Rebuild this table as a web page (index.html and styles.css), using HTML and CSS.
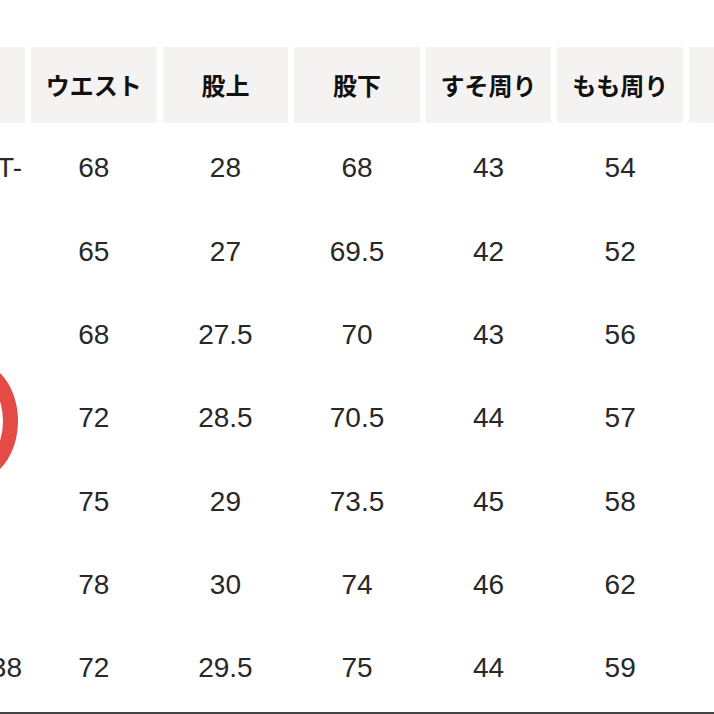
FILE: index.html
```html
<!DOCTYPE html>
<html lang="ja">
<head>
<meta charset="utf-8">
<link rel="stylesheet" href="styles.css">
</head>
<body>
<div class="page">
  <div class="table">
    <div class="cell head"></div>
    <div class="cell head">ウエスト</div>
    <div class="cell head">股上</div>
    <div class="cell head">股下</div>
    <div class="cell head">すそ周り</div>
    <div class="cell head">もも周り</div>
    <div class="cell head"></div>

    <div class="cell first">SHORT-</div>
    <div class="cell">68</div><div class="cell">28</div><div class="cell">68</div><div class="cell">43</div><div class="cell">54</div><div class="cell"></div>

    <div class="cell first"></div>
    <div class="cell">65</div><div class="cell">27</div><div class="cell">69.5</div><div class="cell">42</div><div class="cell">52</div><div class="cell"></div>

    <div class="cell first"></div>
    <div class="cell">68</div><div class="cell">27.5</div><div class="cell">70</div><div class="cell">43</div><div class="cell">56</div><div class="cell"></div>

    <div class="cell first"></div>
    <div class="cell">72</div><div class="cell">28.5</div><div class="cell">70.5</div><div class="cell">44</div><div class="cell">57</div><div class="cell"></div>

    <div class="cell first"></div>
    <div class="cell">75</div><div class="cell">29</div><div class="cell">73.5</div><div class="cell">45</div><div class="cell">58</div><div class="cell"></div>

    <div class="cell first"></div>
    <div class="cell">78</div><div class="cell">30</div><div class="cell">74</div><div class="cell">46</div><div class="cell">62</div><div class="cell"></div>

    <div class="cell first">W38</div>
    <div class="cell">72</div><div class="cell">29.5</div><div class="cell">75</div><div class="cell">44</div><div class="cell">59</div><div class="cell"></div>
  </div>
  <div class="rule"></div>
  <div class="mark"></div>
</div>
</body>
</html>
```

FILE: styles.css
```css
html, body {
  margin: 0;
  padding: 0;
  background: #ffffff;
}
body {
  width: 714px;
  height: 714px;
  overflow: hidden;
}
.page {
  position: relative;
  width: 714px;
  height: 714px;
  overflow: hidden;
  padding-top: 43.33px;
  box-sizing: border-box;
}
.table {
  display: grid;
  grid-template-columns: repeat(7, 125.6px);
  grid-auto-rows: 83.33px;
  column-gap: 6px;
  margin-left: -100.6px;
  width: max-content;
}
.cell {
  display: flex;
  align-items: center;
  justify-content: center;
  font-family: "Liberation Sans", Arial, sans-serif;
  font-size: 28px;
  color: #282828;
  white-space: nowrap;
}
.cell.head {
  margin: 3.3px 0;
  background: #f4f3f2;
  font-family: "Noto Sans CJK JP", sans-serif;
  font-weight: 700;
  font-size: 24px;
  color: #111111;
}
.cell.first {
  justify-content: flex-end;
  padding-right: 3px;
}
.rule {
  margin-top: 2px;
  height: 2px;
  background: #444444;
}
.mark {
  position: absolute;
  left: -72px;
  top: 361px;
  width: 90px;
  height: 120px;
  box-sizing: border-box;
  border: 15px solid #e44b47;
  border-radius: 50%;
}
```
